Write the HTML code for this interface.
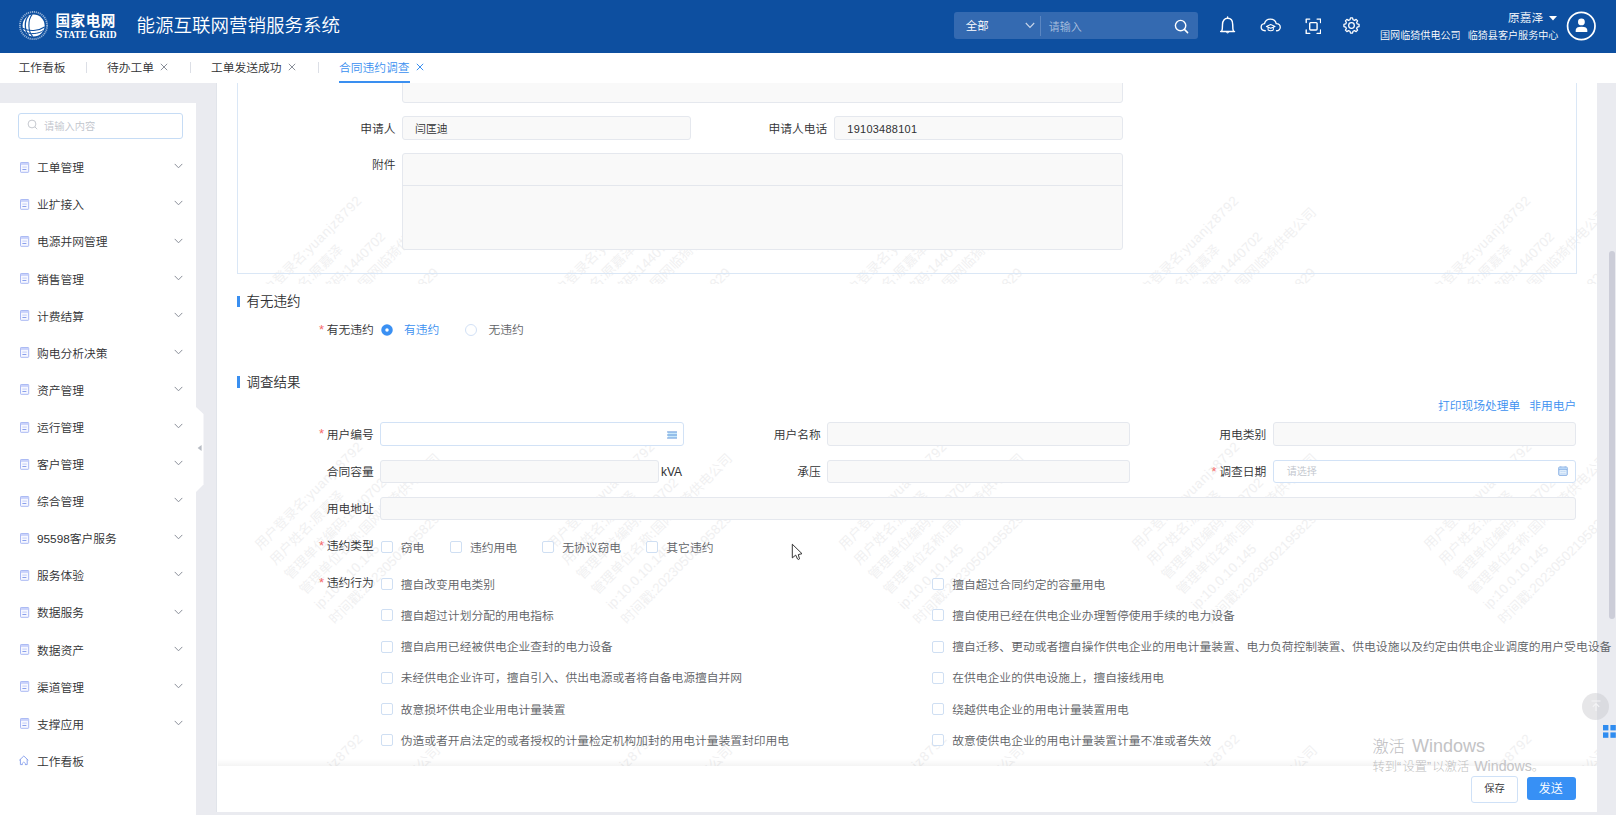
<!DOCTYPE html>
<html lang="zh-CN">
<head>
<meta charset="utf-8">
<title>能源互联网营销服务系统</title>
<style>
*{box-sizing:border-box;margin:0;padding:0}
html,body{width:1616px;height:815px;overflow:hidden;background:#eaebf0}
body{font-family:"Liberation Sans","Noto Sans CJK SC",sans-serif;font-size:11.78px;font-weight:350;color:#303133;position:relative}
.abs{position:absolute}
.t{position:absolute;white-space:nowrap;line-height:1;transform:translateY(-50%)}
/* header */
#hdr{position:absolute;left:0;top:0;width:1616px;height:52.7px;background:#0d4fa0}
#hdr .t{color:#fff}
/* tabs */
#tabs{position:absolute;left:0;top:52.5px;width:1616px;height:30.5px;background:#fff}
#tabs .t{top:15px;color:#303133}
#tabs .sep{position:absolute;top:9.5px;width:1px;height:11px;background:#dcdfe6}
#tabs .x{position:absolute;top:10.5px;width:8px;height:8px}
/* sidebar */
#side{position:absolute;left:0;top:103px;width:196px;height:712px;background:#fff}
#side .mi{position:absolute;left:0;width:196px;height:37px}
#side .mi .ic{position:absolute;left:19.9px;top:12.4px;width:10px;height:11px}
#side .mi .t{left:37px;top:18.8px;color:#303133}
#side .mi .cv{position:absolute;left:174px;top:13.9px;width:9px;height:6px}
/* main */
#main{position:absolute;left:215.5px;top:83px;width:1381px;height:728.5px;background:#fff;overflow:hidden;border-left:1px solid #e1e4ea}
#mainc{position:absolute;left:-216.5px;top:-83px;width:1616px;height:815px}
.inp{position:absolute;height:23.5px;border:1px solid #e5e8ee;border-radius:3px;background:#f9f9f9}
.inp.en{background:#fff;border-color:#d2e2f6}
.lbl{position:absolute;white-space:nowrap;line-height:1;transform:translateY(-50%);color:#303133;text-align:right}
.star{color:#f56c6c;margin-right:2.6px;font-size:13px;position:relative;top:-0.3px;line-height:0}
.cb{position:absolute;width:12px;height:12px;border:1px solid #cfdff3;border-radius:2px;background:#fff}
.ct{position:absolute;white-space:nowrap;line-height:1;transform:translateY(-50%);color:#606266}
.sec{position:absolute;left:237.25px;width:3px;height:11.5px;background:#3a8ff0}
.sect{position:absolute;left:246.5px;white-space:nowrap;line-height:1;transform:translateY(-50%);font-size:13.47px;color:#303133}
.wm{position:absolute;color:#f0f0f1;font-size:13.47px;line-height:21px;white-space:nowrap;transform-origin:0 0;transform:rotate(-45deg)}
</style>
</head>
<body>
<!-- HEADER -->
<div id="hdr">
<svg class="abs" style="left:18.5px;top:11.2px" width="29" height="29" viewBox="0 0 29 29">
<circle cx="14.5" cy="14.5" r="13.6" fill="none" stroke="#dfe8f5" stroke-width="1.9" stroke-dasharray="1.2 0.8" opacity=".62"/>
<circle cx="14.6" cy="14.5" r="11" fill="#ffffff"/>
<path d="M9.5 4.6 C5.2 9.5 5.2 19.5 9.8 24.6" fill="none" stroke="#0d4fa0" stroke-width="1.3"/>
<path d="M13.2 3.4 C8.6 9 8.8 20.5 13.8 25.7" fill="none" stroke="#0d4fa0" stroke-width="1.1"/>
<path d="M3.6 17.2 C10 20.8 19.5 20.2 25.6 16" fill="none" stroke="#0d4fa0" stroke-width="1.1"/>
<path d="M5 20.6 C11 23.8 19.5 23 24.3 19.5" fill="none" stroke="#0d4fa0" stroke-width="1"/>
</svg>
<div class="t" style="left:55.5px;top:20.9px;font-size:14.6px;font-weight:700;letter-spacing:0.5px">国家电网</div>
<div class="t" style="left:55.5px;top:34px;font-family:'Liberation Serif',serif;font-weight:700;font-size:9.5px;letter-spacing:0px"><span style="font-size:12.6px">S</span>TATE <span style="font-size:12.6px">G</span>RID</div>
<div class="t" style="left:136.5px;top:26px;font-size:18.5px">能源互联网营销服务系统</div>
<div class="abs" style="left:953.75px;top:12px;width:244.5px;height:26.75px;border-radius:3px;background:#346ab1"></div>
<div class="t" style="left:965.75px;top:27px;font-size:11.4px">全部</div>
<svg class="abs" style="left:1024.5px;top:22px" width="10" height="7" viewBox="0 0 10 7"><path d="M0.8 1 L5 5.4 L9.2 1" fill="none" stroke="#c9d6ea" stroke-width="1.1"/></svg>
<div class="abs" style="left:1040px;top:16px;width:1px;height:20px;background:#5b86c1"></div>
<div class="t" style="left:1048.75px;top:26.7px;font-size:11px;color:#a9bfde">请输入</div>
<svg class="abs" style="left:1174px;top:19px" width="15" height="15" viewBox="0 0 15 15"><circle cx="6.6" cy="6.6" r="5.2" fill="none" stroke="#fff" stroke-width="1.4"/><path d="M10.4 10.4 L13.6 13.6" stroke="#fff" stroke-width="1.5" stroke-linecap="round"/></svg>
<!-- bell -->
<svg class="abs" style="left:1218.5px;top:15.5px" width="17" height="19" viewBox="0 0 17 19"><path d="M8.6 0.9 V2.2 M2.7 15.2 C3.5 13.4 3.5 11 3.5 8.4 C3.5 4.6 5.6 2.3 8.6 2.3 C11.6 2.3 13.7 4.6 13.7 8.4 C13.7 11 13.7 13.4 14.5 15.2 M1.7 15.4 H15.5" fill="none" stroke="#fff" stroke-width="1.45" stroke-linecap="round" stroke-linejoin="round"/><path d="M7 16.3 C7.5 17.8 9.7 17.8 10.2 16.3 Z" fill="#fff"/></svg>
<!-- cloud -->
<svg class="abs" style="left:1259.6px;top:17.6px" width="21.6" height="15" viewBox="0 0 23 16"><path d="M5.6 13.6 C2.9 13.6 1.2 11.9 1.2 9.7 C1.2 7.6 2.8 6.1 4.8 5.9 C5.5 3.1 7.9 1.2 11 1.2 C14.2 1.2 16.7 3.3 17.3 6.1 C19.7 6.2 21.6 7.8 21.6 9.9 C21.6 12 19.9 13.6 17.6 13.6" fill="none" stroke="#fff" stroke-width="1.4" stroke-linecap="round"/><path d="M6.8 9 L11.4 7 L16 9 L11.4 11 Z M8.6 10.2 L8.6 12.6 C9.8 13.9 13 13.9 14.2 12.6 L14.2 10.2" fill="none" stroke="#fff" stroke-width="1.1" stroke-linejoin="round"/></svg>
<!-- fullscreen -->
<svg class="abs" style="left:1304.5px;top:17.6px" width="16.8" height="16.6" viewBox="0 0 18 18"><path d="M1.2 5 L1.2 1.2 L5 1.2 M13 1.2 L16.8 1.2 L16.8 5 M16.8 13 L16.8 16.8 L13 16.8 M5 16.8 L1.2 16.8 L1.2 13" fill="none" stroke="#fff" stroke-width="1.5" stroke-linecap="round" stroke-linejoin="round"/><rect x="5" y="5" width="8" height="8" rx="1" fill="none" stroke="#fff" stroke-width="1.5"/></svg>
<!-- gear -->
<svg class="abs" style="left:1342.6px;top:16.6px" width="17" height="17" viewBox="0 0 18 18"><path d="M7.92 0.97 L10.08 0.97 L10.61 2.91 L12.16 3.55 L13.91 2.56 L15.44 4.09 L14.45 5.84 L15.09 7.39 L17.03 7.92 L17.03 10.08 L15.09 10.61 L14.45 12.16 L15.44 13.91 L13.91 15.44 L12.16 14.45 L10.61 15.09 L10.08 17.03 L7.92 17.03 L7.39 15.09 L5.84 14.45 L4.09 15.44 L2.56 13.91 L3.55 12.16 L2.91 10.61 L0.97 10.08 L0.97 7.92 L2.91 7.39 L3.55 5.84 L2.56 4.09 L4.09 2.56 L5.84 3.55 L7.39 2.91 Z" fill="none" stroke="#fff" stroke-width="1.35" stroke-linejoin="round"/><circle cx="9" cy="9" r="3" fill="none" stroke="#fff" stroke-width="1.35"/></svg>
<div class="t" style="left:1508px;top:18.5px;font-size:11.8px">原嘉泽</div>
<svg class="abs" style="left:1548.8px;top:15.6px" width="8" height="5" viewBox="0 0 8 5"><path d="M0 0 L8 0 L4 4.6 Z" fill="#fff"/></svg>
<div class="t" style="left:1380px;top:35.5px;font-size:10.08px">国网临猗供电公司</div>
<div class="t" style="left:1467.7px;top:35.5px;font-size:10.08px">临猗县客户服务中心</div>
<svg class="abs" style="left:1566.2px;top:10.9px" width="30.6" height="30.6" viewBox="0 0 30 30"><circle cx="15" cy="14.7" r="13.45" fill="none" stroke="#fff" stroke-width="1.7"/><circle cx="15.1" cy="10.7" r="3.35" fill="#fff"/><path d="M9.5 20.6 V18.7 C9.5 16.5 11.5 15.4 15.2 15.4 C18.9 15.4 20.9 16.5 20.9 18.7 V20.6 Z" fill="#fff"/></svg>
</div>
<!-- TABS -->
<div id="tabs">
<div class="t" style="left:18.5px">工作看板</div>
<div class="sep" style="left:86px"></div>
<div class="t" style="left:107px">待办工单</div>
<svg class="x" style="left:160px" viewBox="0 0 8 8"><path d="M0.8 0.8 L7.2 7.2 M7.2 0.8 L0.8 7.2" stroke="#8a8f99" stroke-width="1"/></svg>
<div class="sep" style="left:190px"></div>
<div class="t" style="left:211px">工单发送成功</div>
<svg class="x" style="left:288px" viewBox="0 0 8 8"><path d="M0.8 0.8 L7.2 7.2 M7.2 0.8 L0.8 7.2" stroke="#8a8f99" stroke-width="1"/></svg>
<div class="sep" style="left:318px"></div>
<div class="t" style="left:339px;color:#3a8ff0">合同违约调查</div>
<svg class="x" style="left:416px" viewBox="0 0 8 8"><path d="M0.8 0.8 L7.2 7.2 M7.2 0.8 L0.8 7.2" stroke="#3a8ff0" stroke-width="1"/></svg>
<div class="abs" style="left:339px;top:28.2px;width:71px;height:2.3px;background:#3a8ff0"></div>
</div>
<!-- SIDEBAR -->
<div id="side">
<div class="abs" style="left:18px;top:10px;width:165px;height:25.5px;border:1px solid #c6dcf5;border-radius:3px;background:#fff"></div>
<svg class="abs" style="left:27.3px;top:15.8px" width="12" height="12" viewBox="0 0 12 12"><circle cx="5" cy="5" r="3.9" fill="none" stroke="#bfc3ca" stroke-width="0.9"/><path d="M7.9 7.9 L10.2 10.2" stroke="#bfc3ca" stroke-width="0.9"/></svg>
<div class="t" style="left:44px;top:24px;font-size:10.25px;color:#c0c4cc">请输入内容</div>
<div class="mi" style="top:46.50px"><svg class="ic" viewBox="0 0 10 11"><rect x="0.5" y="0.5" width="8.2" height="9.8" rx="0.6" fill="#f7f8ff" stroke="#a9b8f3" stroke-width="1"/><rect x="0.9" y="0.9" width="7.4" height="2" fill="#c9d2fb"/><path d="M2.4 5.1 H6.8" stroke="#bcc8f7" stroke-width="0.9"/><path d="M2.4 7.5 H6.4" stroke="#7f96ea" stroke-width="0.9"/></svg><div class="t">工单管理</div><svg class="cv" viewBox="0 0 9 6"><path d="M0.7 0.9 L4.5 4.8 L8.3 0.9" fill="none" stroke="#8a8f99" stroke-width="1"/></svg></div>
<div class="mi" style="top:83.60px"><svg class="ic" viewBox="0 0 10 11"><rect x="0.5" y="0.5" width="8.2" height="9.8" rx="0.6" fill="#f7f8ff" stroke="#a9b8f3" stroke-width="1"/><rect x="0.9" y="0.9" width="7.4" height="2" fill="#c9d2fb"/><path d="M2.4 5.1 H6.8" stroke="#bcc8f7" stroke-width="0.9"/><path d="M2.4 7.5 H6.4" stroke="#7f96ea" stroke-width="0.9"/></svg><div class="t">业扩接入</div><svg class="cv" viewBox="0 0 9 6"><path d="M0.7 0.9 L4.5 4.8 L8.3 0.9" fill="none" stroke="#8a8f99" stroke-width="1"/></svg></div>
<div class="mi" style="top:120.70px"><svg class="ic" viewBox="0 0 10 11"><rect x="0.5" y="0.5" width="8.2" height="9.8" rx="0.6" fill="#f7f8ff" stroke="#a9b8f3" stroke-width="1"/><rect x="0.9" y="0.9" width="7.4" height="2" fill="#c9d2fb"/><path d="M2.4 5.1 H6.8" stroke="#bcc8f7" stroke-width="0.9"/><path d="M2.4 7.5 H6.4" stroke="#7f96ea" stroke-width="0.9"/></svg><div class="t">电源并网管理</div><svg class="cv" viewBox="0 0 9 6"><path d="M0.7 0.9 L4.5 4.8 L8.3 0.9" fill="none" stroke="#8a8f99" stroke-width="1"/></svg></div>
<div class="mi" style="top:157.80px"><svg class="ic" viewBox="0 0 10 11"><rect x="0.5" y="0.5" width="8.2" height="9.8" rx="0.6" fill="#f7f8ff" stroke="#a9b8f3" stroke-width="1"/><rect x="0.9" y="0.9" width="7.4" height="2" fill="#c9d2fb"/><path d="M2.4 5.1 H6.8" stroke="#bcc8f7" stroke-width="0.9"/><path d="M2.4 7.5 H6.4" stroke="#7f96ea" stroke-width="0.9"/></svg><div class="t">销售管理</div><svg class="cv" viewBox="0 0 9 6"><path d="M0.7 0.9 L4.5 4.8 L8.3 0.9" fill="none" stroke="#8a8f99" stroke-width="1"/></svg></div>
<div class="mi" style="top:194.90px"><svg class="ic" viewBox="0 0 10 11"><rect x="0.5" y="0.5" width="8.2" height="9.8" rx="0.6" fill="#f7f8ff" stroke="#a9b8f3" stroke-width="1"/><rect x="0.9" y="0.9" width="7.4" height="2" fill="#c9d2fb"/><path d="M2.4 5.1 H6.8" stroke="#bcc8f7" stroke-width="0.9"/><path d="M2.4 7.5 H6.4" stroke="#7f96ea" stroke-width="0.9"/></svg><div class="t">计费结算</div><svg class="cv" viewBox="0 0 9 6"><path d="M0.7 0.9 L4.5 4.8 L8.3 0.9" fill="none" stroke="#8a8f99" stroke-width="1"/></svg></div>
<div class="mi" style="top:232.00px"><svg class="ic" viewBox="0 0 10 11"><rect x="0.5" y="0.5" width="8.2" height="9.8" rx="0.6" fill="#f7f8ff" stroke="#a9b8f3" stroke-width="1"/><rect x="0.9" y="0.9" width="7.4" height="2" fill="#c9d2fb"/><path d="M2.4 5.1 H6.8" stroke="#bcc8f7" stroke-width="0.9"/><path d="M2.4 7.5 H6.4" stroke="#7f96ea" stroke-width="0.9"/></svg><div class="t">购电分析决策</div><svg class="cv" viewBox="0 0 9 6"><path d="M0.7 0.9 L4.5 4.8 L8.3 0.9" fill="none" stroke="#8a8f99" stroke-width="1"/></svg></div>
<div class="mi" style="top:269.10px"><svg class="ic" viewBox="0 0 10 11"><rect x="0.5" y="0.5" width="8.2" height="9.8" rx="0.6" fill="#f7f8ff" stroke="#a9b8f3" stroke-width="1"/><rect x="0.9" y="0.9" width="7.4" height="2" fill="#c9d2fb"/><path d="M2.4 5.1 H6.8" stroke="#bcc8f7" stroke-width="0.9"/><path d="M2.4 7.5 H6.4" stroke="#7f96ea" stroke-width="0.9"/></svg><div class="t">资产管理</div><svg class="cv" viewBox="0 0 9 6"><path d="M0.7 0.9 L4.5 4.8 L8.3 0.9" fill="none" stroke="#8a8f99" stroke-width="1"/></svg></div>
<div class="mi" style="top:306.20px"><svg class="ic" viewBox="0 0 10 11"><rect x="0.5" y="0.5" width="8.2" height="9.8" rx="0.6" fill="#f7f8ff" stroke="#a9b8f3" stroke-width="1"/><rect x="0.9" y="0.9" width="7.4" height="2" fill="#c9d2fb"/><path d="M2.4 5.1 H6.8" stroke="#bcc8f7" stroke-width="0.9"/><path d="M2.4 7.5 H6.4" stroke="#7f96ea" stroke-width="0.9"/></svg><div class="t">运行管理</div><svg class="cv" viewBox="0 0 9 6"><path d="M0.7 0.9 L4.5 4.8 L8.3 0.9" fill="none" stroke="#8a8f99" stroke-width="1"/></svg></div>
<div class="mi" style="top:343.30px"><svg class="ic" viewBox="0 0 10 11"><rect x="0.5" y="0.5" width="8.2" height="9.8" rx="0.6" fill="#f7f8ff" stroke="#a9b8f3" stroke-width="1"/><rect x="0.9" y="0.9" width="7.4" height="2" fill="#c9d2fb"/><path d="M2.4 5.1 H6.8" stroke="#bcc8f7" stroke-width="0.9"/><path d="M2.4 7.5 H6.4" stroke="#7f96ea" stroke-width="0.9"/></svg><div class="t">客户管理</div><svg class="cv" viewBox="0 0 9 6"><path d="M0.7 0.9 L4.5 4.8 L8.3 0.9" fill="none" stroke="#8a8f99" stroke-width="1"/></svg></div>
<div class="mi" style="top:380.40px"><svg class="ic" viewBox="0 0 10 11"><rect x="0.5" y="0.5" width="8.2" height="9.8" rx="0.6" fill="#f7f8ff" stroke="#a9b8f3" stroke-width="1"/><rect x="0.9" y="0.9" width="7.4" height="2" fill="#c9d2fb"/><path d="M2.4 5.1 H6.8" stroke="#bcc8f7" stroke-width="0.9"/><path d="M2.4 7.5 H6.4" stroke="#7f96ea" stroke-width="0.9"/></svg><div class="t">综合管理</div><svg class="cv" viewBox="0 0 9 6"><path d="M0.7 0.9 L4.5 4.8 L8.3 0.9" fill="none" stroke="#8a8f99" stroke-width="1"/></svg></div>
<div class="mi" style="top:417.50px"><svg class="ic" viewBox="0 0 10 11"><rect x="0.5" y="0.5" width="8.2" height="9.8" rx="0.6" fill="#f7f8ff" stroke="#a9b8f3" stroke-width="1"/><rect x="0.9" y="0.9" width="7.4" height="2" fill="#c9d2fb"/><path d="M2.4 5.1 H6.8" stroke="#bcc8f7" stroke-width="0.9"/><path d="M2.4 7.5 H6.4" stroke="#7f96ea" stroke-width="0.9"/></svg><div class="t">95598客户服务</div><svg class="cv" viewBox="0 0 9 6"><path d="M0.7 0.9 L4.5 4.8 L8.3 0.9" fill="none" stroke="#8a8f99" stroke-width="1"/></svg></div>
<div class="mi" style="top:454.60px"><svg class="ic" viewBox="0 0 10 11"><rect x="0.5" y="0.5" width="8.2" height="9.8" rx="0.6" fill="#f7f8ff" stroke="#a9b8f3" stroke-width="1"/><rect x="0.9" y="0.9" width="7.4" height="2" fill="#c9d2fb"/><path d="M2.4 5.1 H6.8" stroke="#bcc8f7" stroke-width="0.9"/><path d="M2.4 7.5 H6.4" stroke="#7f96ea" stroke-width="0.9"/></svg><div class="t">服务体验</div><svg class="cv" viewBox="0 0 9 6"><path d="M0.7 0.9 L4.5 4.8 L8.3 0.9" fill="none" stroke="#8a8f99" stroke-width="1"/></svg></div>
<div class="mi" style="top:491.70px"><svg class="ic" viewBox="0 0 10 11"><rect x="0.5" y="0.5" width="8.2" height="9.8" rx="0.6" fill="#f7f8ff" stroke="#a9b8f3" stroke-width="1"/><rect x="0.9" y="0.9" width="7.4" height="2" fill="#c9d2fb"/><path d="M2.4 5.1 H6.8" stroke="#bcc8f7" stroke-width="0.9"/><path d="M2.4 7.5 H6.4" stroke="#7f96ea" stroke-width="0.9"/></svg><div class="t">数据服务</div><svg class="cv" viewBox="0 0 9 6"><path d="M0.7 0.9 L4.5 4.8 L8.3 0.9" fill="none" stroke="#8a8f99" stroke-width="1"/></svg></div>
<div class="mi" style="top:528.80px"><svg class="ic" viewBox="0 0 10 11"><rect x="0.5" y="0.5" width="8.2" height="9.8" rx="0.6" fill="#f7f8ff" stroke="#a9b8f3" stroke-width="1"/><rect x="0.9" y="0.9" width="7.4" height="2" fill="#c9d2fb"/><path d="M2.4 5.1 H6.8" stroke="#bcc8f7" stroke-width="0.9"/><path d="M2.4 7.5 H6.4" stroke="#7f96ea" stroke-width="0.9"/></svg><div class="t">数据资产</div><svg class="cv" viewBox="0 0 9 6"><path d="M0.7 0.9 L4.5 4.8 L8.3 0.9" fill="none" stroke="#8a8f99" stroke-width="1"/></svg></div>
<div class="mi" style="top:565.90px"><svg class="ic" viewBox="0 0 10 11"><rect x="0.5" y="0.5" width="8.2" height="9.8" rx="0.6" fill="#f7f8ff" stroke="#a9b8f3" stroke-width="1"/><rect x="0.9" y="0.9" width="7.4" height="2" fill="#c9d2fb"/><path d="M2.4 5.1 H6.8" stroke="#bcc8f7" stroke-width="0.9"/><path d="M2.4 7.5 H6.4" stroke="#7f96ea" stroke-width="0.9"/></svg><div class="t">渠道管理</div><svg class="cv" viewBox="0 0 9 6"><path d="M0.7 0.9 L4.5 4.8 L8.3 0.9" fill="none" stroke="#8a8f99" stroke-width="1"/></svg></div>
<div class="mi" style="top:603.00px"><svg class="ic" viewBox="0 0 10 11"><rect x="0.5" y="0.5" width="8.2" height="9.8" rx="0.6" fill="#f7f8ff" stroke="#a9b8f3" stroke-width="1"/><rect x="0.9" y="0.9" width="7.4" height="2" fill="#c9d2fb"/><path d="M2.4 5.1 H6.8" stroke="#bcc8f7" stroke-width="0.9"/><path d="M2.4 7.5 H6.4" stroke="#7f96ea" stroke-width="0.9"/></svg><div class="t">支撑应用</div><svg class="cv" viewBox="0 0 9 6"><path d="M0.7 0.9 L4.5 4.8 L8.3 0.9" fill="none" stroke="#8a8f99" stroke-width="1"/></svg></div>
<div class="mi" style="top:640.10px"><svg class="ic" style="top:11.6px;left:19.4px" viewBox="0 0 10 11"><path d="M0.6 5 L4.8 1 L9 5 M1.4 4.4 L1.4 9.6 L3.2 9.6 M8.2 4.4 L8.2 9.6 L6.4 9.6" fill="none" stroke="#8fa6ee" stroke-width="1" stroke-linejoin="round" stroke-linecap="round"/><path d="M3.2 9.6 C3.2 6.4 6.4 6.4 6.4 9.6" fill="none" stroke="#8fa6ee" stroke-width="0.9"/></svg><div class="t">工作看板</div></div>
</div>
<!-- MAIN -->
<div id="main"><div id="mainc">
<div class="abs" style="left:0;top:0;width:1616px;height:815px;overflow:hidden"><div class="wm" style="left:-42.7px;top:539.6px">用户登录名:<span style="letter-spacing:.6px">yuanjz8792</span><br>用户姓名:原嘉泽<br>管理单位编码:1440702<br>管理单位名称:国网临猗供电公司<br>ip:10.0.10.145<br>时间戳:20230502195829</div><div class="wm" style="left:-42.7px;top:831.6px">用户登录名:<span style="letter-spacing:.6px">yuanjz8792</span><br>用户姓名:原嘉泽<br>管理单位编码:1440702<br>管理单位名称:国网临猗供电公司<br>ip:10.0.10.145<br>时间戳:20230502195829</div><div class="wm" style="left:249.6px;top:539.6px">用户登录名:<span style="letter-spacing:.6px">yuanjz8792</span><br>用户姓名:原嘉泽<br>管理单位编码:1440702<br>管理单位名称:国网临猗供电公司<br>ip:10.0.10.145<br>时间戳:20230502195829</div><div class="wm" style="left:249.6px;top:831.6px">用户登录名:<span style="letter-spacing:.6px">yuanjz8792</span><br>用户姓名:原嘉泽<br>管理单位编码:1440702<br>管理单位名称:国网临猗供电公司<br>ip:10.0.10.145<br>时间戳:20230502195829</div><div class="wm" style="left:541.9px;top:539.6px">用户登录名:<span style="letter-spacing:.6px">yuanjz8792</span><br>用户姓名:原嘉泽<br>管理单位编码:1440702<br>管理单位名称:国网临猗供电公司<br>ip:10.0.10.145<br>时间戳:20230502195829</div><div class="wm" style="left:541.9px;top:831.6px">用户登录名:<span style="letter-spacing:.6px">yuanjz8792</span><br>用户姓名:原嘉泽<br>管理单位编码:1440702<br>管理单位名称:国网临猗供电公司<br>ip:10.0.10.145<br>时间戳:20230502195829</div><div class="wm" style="left:834.2px;top:539.6px">用户登录名:<span style="letter-spacing:.6px">yuanjz8792</span><br>用户姓名:原嘉泽<br>管理单位编码:1440702<br>管理单位名称:国网临猗供电公司<br>ip:10.0.10.145<br>时间戳:20230502195829</div><div class="wm" style="left:834.2px;top:831.6px">用户登录名:<span style="letter-spacing:.6px">yuanjz8792</span><br>用户姓名:原嘉泽<br>管理单位编码:1440702<br>管理单位名称:国网临猗供电公司<br>ip:10.0.10.145<br>时间戳:20230502195829</div><div class="wm" style="left:1126.5px;top:539.6px">用户登录名:<span style="letter-spacing:.6px">yuanjz8792</span><br>用户姓名:原嘉泽<br>管理单位编码:1440702<br>管理单位名称:国网临猗供电公司<br>ip:10.0.10.145<br>时间戳:20230502195829</div><div class="wm" style="left:1126.5px;top:831.6px">用户登录名:<span style="letter-spacing:.6px">yuanjz8792</span><br>用户姓名:原嘉泽<br>管理单位编码:1440702<br>管理单位名称:国网临猗供电公司<br>ip:10.0.10.145<br>时间戳:20230502195829</div><div class="wm" style="left:1418.8px;top:539.6px">用户登录名:<span style="letter-spacing:.6px">yuanjz8792</span><br>用户姓名:原嘉泽<br>管理单位编码:1440702<br>管理单位名称:国网临猗供电公司<br>ip:10.0.10.145<br>时间戳:20230502195829</div><div class="wm" style="left:1418.8px;top:831.6px">用户登录名:<span style="letter-spacing:.6px">yuanjz8792</span><br>用户姓名:原嘉泽<br>管理单位编码:1440702<br>管理单位名称:国网临猗供电公司<br>ip:10.0.10.145<br>时间戳:20230502195829</div></div><div class="abs" style="left:0;top:83px;width:1616px;height:200.5px;overflow:hidden"><div class="abs" style="left:0;top:-83px;width:1616px;height:815px"><div class="wm" style="left:-43.7px;top:293.6px">用户登录名:<span style="letter-spacing:.6px">yuanjz8792</span><br>用户姓名:原嘉泽<br>管理单位编码:1440702<br>管理单位名称:国网临猗供电公司<br>ip:10.0.10.145<br>时间戳:20230502195829</div><div class="wm" style="left:248.6px;top:293.6px">用户登录名:<span style="letter-spacing:.6px">yuanjz8792</span><br>用户姓名:原嘉泽<br>管理单位编码:1440702<br>管理单位名称:国网临猗供电公司<br>ip:10.0.10.145<br>时间戳:20230502195829</div><div class="wm" style="left:540.9px;top:293.6px">用户登录名:<span style="letter-spacing:.6px">yuanjz8792</span><br>用户姓名:原嘉泽<br>管理单位编码:1440702<br>管理单位名称:国网临猗供电公司<br>ip:10.0.10.145<br>时间戳:20230502195829</div><div class="wm" style="left:833.2px;top:293.6px">用户登录名:<span style="letter-spacing:.6px">yuanjz8792</span><br>用户姓名:原嘉泽<br>管理单位编码:1440702<br>管理单位名称:国网临猗供电公司<br>ip:10.0.10.145<br>时间戳:20230502195829</div><div class="wm" style="left:1125.5px;top:293.6px">用户登录名:<span style="letter-spacing:.6px">yuanjz8792</span><br>用户姓名:原嘉泽<br>管理单位编码:1440702<br>管理单位名称:国网临猗供电公司<br>ip:10.0.10.145<br>时间戳:20230502195829</div><div class="wm" style="left:1417.8px;top:293.6px">用户登录名:<span style="letter-spacing:.6px">yuanjz8792</span><br>用户姓名:原嘉泽<br>管理单位编码:1440702<br>管理单位名称:国网临猗供电公司<br>ip:10.0.10.145<br>时间戳:20230502195829</div></div></div>
<div class="abs" style="left:237.25px;top:60px;width:1339.5px;height:214.25px;border:1px solid #dae7f6;background:transparent"></div>
<div class="inp" style="left:402px;top:70px;width:720.5px;height:32.5px"></div>
<div class="lbl" style="right:1220.5px;top:128.6px">申请人</div>
<div class="inp" style="left:402px;top:116px;width:288.5px"></div>
<div class="t" style="left:415px;top:128.7px;color:#303133;font-size:10.94px">闫匡迪</div>
<div class="lbl" style="right:788.7px;top:128.6px">申请人电话</div>
<div class="inp" style="left:834px;top:116px;width:288.5px"></div>
<div class="t" style="left:847.3px;top:128.5px;color:#303133;font-size:10.94px;letter-spacing:0.28px">19103488101</div>
<div class="lbl" style="right:1220.5px;top:165.4px">附件</div>
<div class="inp" style="left:402px;top:153px;width:720.5px;height:96.5px"></div>
<div class="abs" style="left:402px;top:185px;width:720.5px;height:1px;background:#e4e7ed"></div>
<div class="sec" style="top:295.5px"></div><div class="sect" style="top:301.7px">有无违约</div>
<div class="lbl" style="right:1242.3px;top:330.4px"><span class="star">*</span>有无违约</div>
<svg class="abs" style="left:379.8px;top:322.85px" width="14" height="14" viewBox="0 0 14 14"><circle cx="7" cy="7" r="5.75" fill="#3a90f3"/><circle cx="7" cy="7" r="1.75" fill="#fff"/></svg>
<div class="ct" style="left:404px;top:330.3px;color:#3a8ff0">有违约</div>
<div class="abs" style="left:464.6px;top:323.8px;width:12.4px;height:12.4px;border-radius:50%;border:1px solid #d2e1f6;background:#fff"></div>
<div class="ct" style="left:488.5px;top:330.3px">无违约</div>
<div class="sec" style="top:376.3px"></div><div class="sect" style="top:382.5px">调查结果</div>
<div class="t" style="left:1438px;top:405.7px;color:#3a8ff0">打印现场处理单</div>
<div class="t" style="left:1529.3px;top:405.7px;color:#3a8ff0">非用电户</div>
<div class="lbl" style="right:1242.3px;top:434.6px"><span class="star">*</span>用户编号</div>
<div class="inp en" style="left:380px;top:422.3px;width:303.7px"></div>
<svg class="abs" style="left:666.6px;top:430.5px" width="10.2" height="8" viewBox="0 0 10.2 8"><rect x="0.8" y="1" width="9.2" height="6" fill="#c9e8fb"/><path d="M0.1 0.95 H10 M0.1 4 H10 M0.1 7.05 H10" stroke="#5a8fd6" stroke-width="0.95"/></svg>
<div class="lbl" style="right:795.3px;top:434.6px">用户名称</div>
<div class="inp" style="left:827px;top:422.3px;width:303px"></div>
<div class="lbl" style="right:349.70000000000005px;top:434.6px">用电类别</div>
<div class="inp" style="left:1273px;top:422.3px;width:303.3px"></div>
<div class="lbl" style="right:1242.3px;top:471.9px">合同容量</div>
<div class="inp" style="left:380px;top:459.5px;width:279px"></div>
<div class="t" style="left:661px;top:471.7px;color:#303133;font-size:12px">kVA</div>
<div class="lbl" style="right:795.3px;top:471.9px">承压</div>
<div class="inp" style="left:827px;top:459.5px;width:303px"></div>
<div class="lbl" style="right:349.70000000000005px;top:471.9px"><span class="star">*</span>调查日期</div>
<div class="inp en" style="left:1273px;top:459.5px;width:303.3px"></div>
<div class="t" style="left:1286.7px;top:471.9px;color:#c0c4cc;font-size:10.1px">请选择</div>
<svg class="abs" style="left:1558.3px;top:466.2px" width="10" height="10" viewBox="0 0 10 10"><rect x="0.8" y="1.1" width="8.4" height="8.2" rx="0.6" fill="#e6f2fd" stroke="#6c9cdd" stroke-width="0.85"/><rect x="1.2" y="1.5" width="7.6" height="1.9" fill="#b7d6f8"/><path d="M0.8 3.6 H9.2" stroke="#6c9cdd" stroke-width="0.6"/><path d="M2.8 0.5 V1.3 M7.2 0.5 V1.3" stroke="#6c9cdd" stroke-width="0.8"/><path d="M2.6 5.5 H7.4 M2.6 7.4 H7.4" stroke="#8fb6ea" stroke-width="0.6" stroke-dasharray="1 0.9"/></svg>
<div class="lbl" style="right:1242.3px;top:509.1px">用电地址</div>
<div class="inp" style="left:380px;top:496.8px;width:1196.3px"></div>
<div class="lbl" style="right:1242.3px;top:546.1px"><span class="star">*</span>违约类型</div>
<div class="cb" style="left:380.50px;top:541.4px"></div><div class="ct" style="left:400.80px;top:547.8px">窃电</div>
<div class="cb" style="left:449.60px;top:541.4px"></div><div class="ct" style="left:469.90px;top:547.8px">违约用电</div>
<div class="cb" style="left:542.00px;top:541.4px"></div><div class="ct" style="left:562.30px;top:547.8px">无协议窃电</div>
<div class="cb" style="left:646.05px;top:541.4px"></div><div class="ct" style="left:666.35px;top:547.8px">其它违约</div>
<div class="lbl" style="right:1242.3px;top:583.4px"><span class="star">*</span>违约行为</div>
<div class="cb" style="left:380.5px;top:578.20px"></div><div class="ct" style="left:400.8px;top:584.70px">擅自改变用电类别</div>
<div class="cb" style="left:931.8px;top:578.20px"></div><div class="ct" style="left:952.3px;top:584.70px">擅自超过合同约定的容量用电</div>
<div class="cb" style="left:380.5px;top:609.42px"></div><div class="ct" style="left:400.8px;top:615.92px">擅自超过计划分配的用电指标</div>
<div class="cb" style="left:931.8px;top:609.42px"></div><div class="ct" style="left:952.3px;top:615.92px">擅自使用已经在供电企业办理暂停使用手续的电力设备</div>
<div class="cb" style="left:380.5px;top:640.64px"></div><div class="ct" style="left:400.8px;top:647.14px">擅自启用已经被供电企业查封的电力设备</div>
<div class="cb" style="left:931.8px;top:640.64px"></div>
<div class="cb" style="left:380.5px;top:671.86px"></div><div class="ct" style="left:400.8px;top:678.36px">未经供电企业许可，擅自引入、供出电源或者将自备电源擅自并网</div>
<div class="cb" style="left:931.8px;top:671.86px"></div><div class="ct" style="left:952.3px;top:678.36px">在供电企业的供电设施上，擅自接线用电</div>
<div class="cb" style="left:380.5px;top:703.08px"></div><div class="ct" style="left:400.8px;top:709.58px">故意损坏供电企业用电计量装置</div>
<div class="cb" style="left:931.8px;top:703.08px"></div><div class="ct" style="left:952.3px;top:709.58px">绕越供电企业的用电计量装置用电</div>
<div class="cb" style="left:380.5px;top:734.30px"></div><div class="ct" style="left:400.8px;top:740.80px">伪造或者开启法定的或者授权的计量检定机构加封的用电计量装置封印用电</div>
<div class="cb" style="left:931.8px;top:734.30px"></div><div class="ct" style="left:952.3px;top:740.80px">故意使供电企业的用电计量装置计量不准或者失效</div>
<div class="abs" style="left:217.5px;top:759px;width:1379px;height:7px;background:linear-gradient(to bottom,rgba(0,0,0,0),rgba(0,0,0,0.045))"></div>
<div class="abs" style="left:217.5px;top:765.5px;width:1379px;height:50px;background:#fff"></div>
<div class="abs" style="left:1471px;top:775.7px;width:47px;height:27px;border:1px solid #cfe1f7;border-radius:3px;background:#fff"></div>
<div class="t" style="left:1484.3px;top:789.4px;font-size:10.3px;color:#303133">保存</div>
<div class="abs" style="left:1526.5px;top:776.5px;width:49px;height:23.5px;border-radius:3px;background:#3790f5"></div>
<div class="t" style="left:1538.8px;top:788.6px;font-size:12px;color:#fff">发送</div>
</div></div>
<!-- OVERLAYS -->
<div class="ct" style="left:952.3px;top:647.14px">擅自迁移、更动或者擅自操作供电企业的用电计量装置、电力负荷控制装置、供电设施以及约定由供电企业调度的用户受电设备</div>
<div class="abs" style="left:1609px;top:251px;width:5.5px;height:368px;border-radius:3px;background:#cccdd8"></div>
<svg class="abs" style="left:195.5px;top:407px" width="8" height="85" viewBox="0 0 8 85"><path d="M0 0 L7.5 7 L7.5 77.5 L0 85 Z" fill="#fff"/><path d="M1.6 41 L5.6 38 L5.6 44 Z" fill="#b8bcc4"/></svg>
<div class="abs" style="left:1582.3px;top:692.6px;width:27px;height:27px;border-radius:50%;background:rgba(200,200,205,0.45)"></div>
<svg class="abs" style="left:1589.8px;top:700px" width="12" height="12" viewBox="0 0 12 12"><path d="M1.5 1 H10.5 M6 11 V3.8 M2.8 6.8 L6 3.6 L9.2 6.8" fill="none" stroke="#f4f4f6" stroke-width="1.1"/></svg>
<svg class="abs" style="left:1602.8px;top:725px" width="14" height="14" viewBox="0 0 14 14"><rect x="0" y="0" width="5.4" height="5.4" fill="#2f8cf0"/><rect x="7.4" y="0" width="5.4" height="5.4" fill="#2f8cf0"/><rect x="0" y="7.4" width="5.4" height="5.4" fill="#2f8cf0"/><rect x="7.4" y="7.4" width="5.4" height="5.4" fill="#2f8cf0"/></svg>
<div class="t" style="left:1372.5px;top:745.6px;font-size:16.2px;color:#bdbdbf;font-weight:300">激活 <span style="font-size:18px;margin-left:2.6px;color:#c3c3c5">Windows</span></div>
<div class="t" style="left:1372.5px;top:765.7px;font-size:12.3px;color:#bfbfc1;font-weight:300">转到<span style="letter-spacing:1.2px">“</span>设置<span style="letter-spacing:1.2px">”</span>以激活 <span style="font-size:14.2px;margin-left:1.6px;color:#c4c4c6">Windows</span>。</div>
<svg class="abs" style="left:790px;top:542px" width="14" height="20" viewBox="0 0 14 20"><path d="M2.3 2.2 L2.3 15.9 L5.7 13.1 L7.5 17 Q8.5 18.1 9.5 16.9 L8.3 12.6 L12 11.7 Z" fill="#fff" stroke="#2a2a2a" stroke-width="0.95" stroke-linejoin="round"/></svg>
</body>
</html>
